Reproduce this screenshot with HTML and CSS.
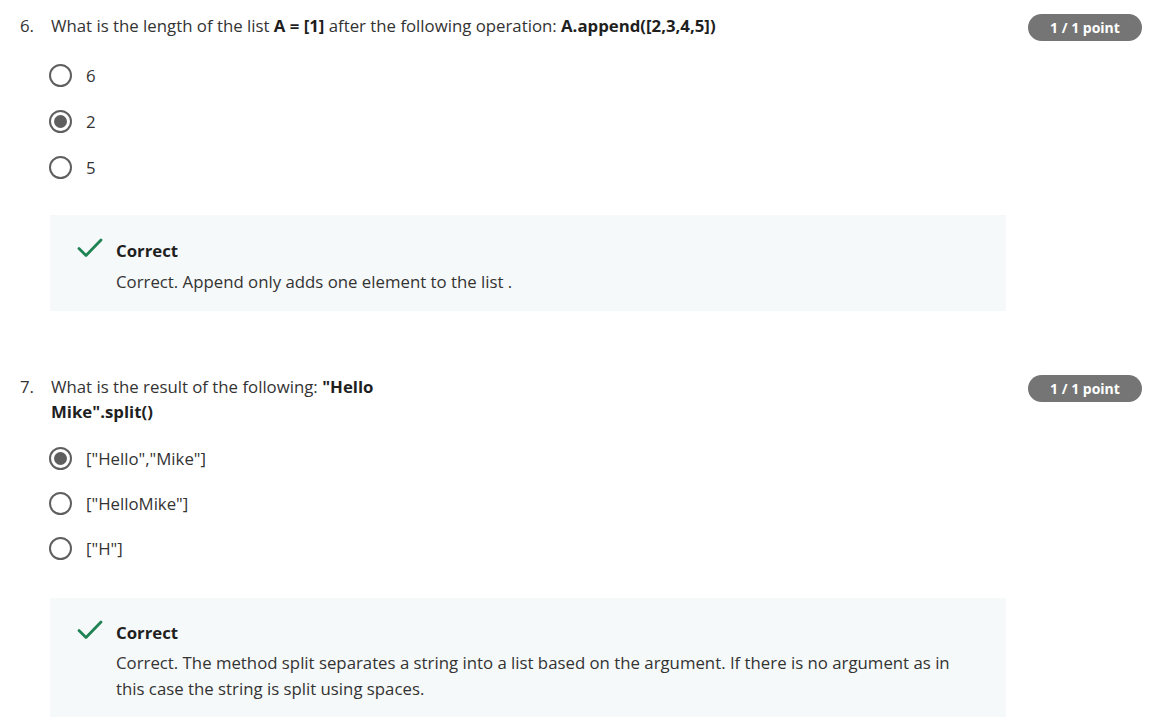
FILE: index.html
```html
<!DOCTYPE html>
<html>
<head>
<meta charset="utf-8">
<link rel="stylesheet" href="styles.css">
</head>
<body>
<div class="quiz">
  <section class="question q6">
    <div class="q-head">
      <div class="q-title"><span class="q-num">6.</span><span class="q-text">What is the length of the list <b>A = [1]</b> after the following operation: <b>A.append([2,3,4,5])</b></span></div>
      <span class="badge">1 / 1 point</span>
    </div>
    <div class="options">
      <div class="option"><span class="radio"></span><span class="opt-text">6</span></div>
      <div class="option"><span class="radio checked"></span><span class="opt-text">2</span></div>
      <div class="option"><span class="radio"></span><span class="opt-text">5</span></div>
    </div>
    <div class="feedback">
      <svg class="check" width="26" height="20" viewBox="0 0 26 20"><path d="M2 10.5 L9 17.5 L24 2" fill="none" stroke="#1f8354" stroke-width="2.8" stroke-linecap="round" stroke-linejoin="round"/></svg>
      <div class="fb-body">
        <div class="fb-title">Correct</div>
        <div class="fb-text">Correct. Append only adds one element to the list .</div>
      </div>
    </div>
  </section>

  <section class="question q7">
    <div class="q-head">
      <div class="q-title"><span class="q-num">7.</span><span class="q-text">What is the result of the following: <b>"Hello<br>Mike".split()</b></span></div>
      <span class="badge">1 / 1 point</span>
    </div>
    <div class="options">
      <div class="option"><span class="radio checked"></span><span class="opt-text">["Hello","Mike"]</span></div>
      <div class="option"><span class="radio"></span><span class="opt-text">["HelloMike"]</span></div>
      <div class="option"><span class="radio"></span><span class="opt-text">["H"]</span></div>
    </div>
    <div class="feedback">
      <svg class="check" width="26" height="20" viewBox="0 0 26 20"><path d="M2 10.5 L9 17.5 L24 2" fill="none" stroke="#1f8354" stroke-width="2.8" stroke-linecap="round" stroke-linejoin="round"/></svg>
      <div class="fb-body">
        <div class="fb-title">Correct</div>
        <div class="fb-text">Correct. The method split separates a string into a list based on the argument. If there is no argument as in this case the string is split using spaces.</div>
      </div>
    </div>
  </section>
</div>
</body>
</html>
```

FILE: styles.css
```css
* { box-sizing: border-box; }
html, body { margin: 0; padding: 0; background: #ffffff; }
body {
  font-family: "Open Sans", "Liberation Sans", sans-serif;
  font-size: 16.8px;
  color: #373a3c;
}
.quiz {
  display: flex;
  flex-direction: column;
  padding: 13px 13px 0 20px;
}
.question { display: flex; flex-direction: column; }
.q7 { margin-top: 63px; }
.q-head {
  display: flex;
  justify-content: space-between;
  align-items: flex-start;
}
.q-title {
  display: flex;
  line-height: 25px;
  color: #333333;
}
.q-num { width: 31px; flex: none; }
.q-text b { font-weight: 700; color: #1f1f1f; }
.badge {
  flex: none;
  background: #757575;
  color: #ffffff;
  font-weight: 700;
  font-size: 14px;
  line-height: 27px;
  height: 27px;
  width: 114px;
  text-align: center;
  border-radius: 14px;
  margin-top: 1px;
}
.options {
  display: flex;
  flex-direction: column;
  padding-left: 29px;
  margin-top: 23px;
  gap: 23px;
}
.q7 .options { margin-top: 23px; gap: 22px; }
.option {
  display: flex;
  align-items: center;
  height: 23px;
  gap: 14px;
  line-height: 23px;
}
.radio {
  width: 23px;
  height: 23px;
  border: 2px solid #5f5f5f;
  border-radius: 50%;
  flex: none;
  display: flex;
  align-items: center;
  justify-content: center;
}
.radio.checked::after {
  content: "";
  width: 13px;
  height: 13px;
  border-radius: 50%;
  background: #5f5f5f;
}
.opt-text { color: #333333; }
.feedback {
  display: flex;
  align-items: flex-start;
  background: #f6f9f9;
  width: 956px;
  margin-left: 30px;
  margin-top: 36px;
  padding: 23px 48px 16px 27px;
  gap: 13px;
}
.q7 .feedback { margin-top: 38px; padding-top: 22px; padding-bottom: 15px; }
.check { flex: none; }
.fb-body { display: flex; flex-direction: column; }
.fb-title { font-weight: 700; color: #1f1f1f; line-height: 26px; }
.fb-text { color: #333333; line-height: 26px; margin-top: 5px; }
.q7 .fb-text { margin-top: 4px; }
```
